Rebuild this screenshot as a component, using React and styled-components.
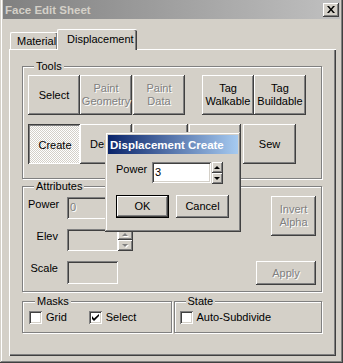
import React from 'react';
import styled, { createGlobalStyle, css } from 'styled-components';

const GlobalStyle = createGlobalStyle`
  html, body { margin: 0; padding: 0; background: #d4d0c8; }
  body {
    font-family: "Liberation Sans", Arial, sans-serif;
    font-size: 11px;
    color: #000;
  }
  * { box-sizing: border-box; }
`;

const raised = css`
  box-shadow: inset -1px -1px #404040, inset 1px 1px #fff, inset -2px -2px #808080, inset 2px 2px #d4d0c8;
`;

const sunken = css`
  box-shadow: inset 1px 1px #808080, inset -1px -1px #fff, inset 2px 2px #404040, inset -2px -2px #d4d0c8;
`;

const disabledText = css`
  color: #808080;
  text-shadow: 1px 1px 0 #fff;
`;

const Window = styled.div`
  position: relative;
  width: 343px;
  height: 363px;
  background: #d4d0c8;
  padding: 0 3px 3px 3px;
  display: flex;
  flex-direction: column;
  box-shadow: inset -1px -1px #404040, inset 1px 0 #d4d0c8, inset -2px -2px #808080, inset 2px 0 #fff;
`;

const TitleBar = styled.div`
  height: 19px;
  flex: 0 0 19px;
  display: flex;
  align-items: center;
  justify-content: space-between;
  padding: 0 1px 0 2px;
  background: linear-gradient(to right, ${p => p.$from}, ${p => p.$to});
  color: ${p => p.$color};
  font-weight: bold;
  font-size: 11.5px;
  white-space: nowrap;
`;

const CloseButton = styled.div`
  width: 16px;
  height: 14px;
  display: flex;
  align-items: center;
  justify-content: center;
  background: #d4d0c8;
  ${raised}
`;

const Body = styled.div`
  display: flex;
  flex-direction: column;
  padding: 10px 4px 0 6px;
`;

const TabStrip = styled.div`
  display: flex;
  align-items: flex-end;
  height: 20px;
  padding-left: 1px;
`;

const Tab = styled.div`
  position: relative;
  width: ${p => p.$width}px;
  height: ${p => (p.$active ? 21 : 17)}px;
  margin-bottom: ${p => (p.$active ? -1 : 0)}px;
  margin-left: ${p => (p.$active ? -1 : 0)}px;
  z-index: ${p => (p.$active ? 1 : 0)};
  padding-left: ${p => p.$pad}px;
  padding-top: ${p => (p.$active ? 3 : 2)}px;
  line-height: 13px;
  background: #d4d0c8;
  border-top: 1px solid #fff;
  border-left: 1px solid #fff;
  border-top-left-radius: 2px;
  border-top-right-radius: 2px;
  box-shadow: inset -1px 0 #404040, inset -2px 0 #808080;
`;

const Panel = styled.div`
  height: 307px;
  display: flex;
  flex-direction: column;
  gap: 1px;
  padding: 10px 14px 0 12px;
  border-top: 1px solid #fff;
  border-left: 1px solid #fff;
  box-shadow: inset -1px -1px #404040, inset -2px -2px #808080;
`;

const GroupBox = styled.fieldset`
  margin: 0;
  min-width: 0;
  padding: ${p => p.$pad};
  border: 1px solid #808080;
  box-shadow: 1px 1px 0 #fff, inset 1px 1px 0 #fff;
  flex: ${p => p.$flex || 'none'};
`;

const Legend = styled.legend`
  margin-left: 6px;
  padding: 0 2px;
  line-height: 13px;
  background: #d4d0c8;
`;

const ToolRow = styled.div`
  display: flex;
  margin-top: ${p => p.$top || 0}px;
`;

const PushButton = styled.div`
  width: ${p => p.$w}px;
  height: ${p => p.$h}px;
  margin-left: ${p => p.$gap || 0}px;
  display: flex;
  align-items: center;
  justify-content: center;
  text-align: center;
  line-height: 13px;
  white-space: pre-line;
  background: #d4d0c8;
  ${raised}
  ${p => p.$disabled && disabledText}
  ${p => p.$checked && css`
    background: repeating-conic-gradient(#fff 0 25%, #d4d0c8 0 50%) 0 0 / 2px 2px;
    box-shadow: inset 1px 1px #404040, inset -1px -1px #fff, inset 2px 2px #808080;
    padding: 2px 0 0 2px;
  `}
  ${p => p.$default && css`
    border: 1px solid #000;
  `}
`;

const AttrLayout = styled.div`
  display: flex;
  justify-content: space-between;
`;

const FieldGrid = styled.div`
  display: grid;
  grid-template-columns: 30px auto;
  grid-auto-rows: 22px;
  column-gap: 9px;
  row-gap: 10px;
`;

const Label = styled.div`
  text-align: ${p => p.$align || 'right'};
  line-height: 13px;
  padding-top: 1px;
  width: ${p => (p.$width ? `${p.$width}px` : 'auto')};
`;

const FieldLine = styled.div`
  display: flex;
  align-items: stretch;
`;

const Field = styled.div`
  width: ${p => p.$w}px;
  height: ${p => p.$h}px;
  padding: 4px 3px 0;
  line-height: 13px;
  background: ${p => (p.$disabled ? '#d4d0c8' : '#fff')};
  ${sunken}
  ${p => p.$disabled && disabledText}
`;

const Spin = styled.div`
  display: flex;
  flex-direction: column;
  width: ${p => p.$w}px;
  height: ${p => p.$h}px;
  margin-left: ${p => p.$gap || 0}px;
`;

const SpinPart = styled.div`
  flex: 1;
  display: flex;
  align-items: center;
  justify-content: center;
  background: #d4d0c8;
  ${raised}
`;

const SideButtons = styled.div`
  display: flex;
  flex-direction: column;
  align-items: flex-end;
  gap: 25px;
  margin-top: -1px;
`;

const GroupRow = styled.div`
  display: flex;
  gap: 2px;
  margin-top: 2px;
`;

const CheckRow = styled.div`
  display: flex;
  gap: ${p => p.$gap}px;
`;

const CheckItem = styled.div`
  display: flex;
  align-items: center;
  gap: 4px;
  line-height: 13px;
`;

const CheckBox = styled.div`
  width: 13px;
  height: 13px;
  display: flex;
  align-items: center;
  justify-content: center;
  background: #fff;
  box-shadow: inset 1px 1px #808080, inset -1px -1px #fff, inset 2px 2px #404040, inset -2px -2px #d4d0c8;
`;

const Dialog = styled.div`
  position: absolute;
  left: 105px;
  top: 132px;
  width: 136px;
  height: 100px;
  padding: 3px;
  background: #d4d0c8;
  box-shadow: inset -1px -1px #404040, inset 1px 1px #d4d0c8, inset -2px -2px #808080, inset 2px 2px #fff;
`;

const DialogContent = styled.div`
  padding: 8px 0 0 8px;
`;

const DialogRow = styled.div`
  display: flex;
  align-items: flex-start;
`;

const ButtonRow = styled.div`
  display: flex;
  gap: 7px;
  margin-top: 11px;
`;

function Arrow({ up, disabled }) {
  const pts = up ? '0,3 3,0 6,3' : '0,0 3,3 6,0';
  return (
    <svg width="7" height="4" viewBox="0 0 7 4">
      {disabled && <polygon points={pts} fill="#fff" transform="translate(1,1)" />}
      <polygon points={pts} fill={disabled ? '#808080' : '#000'} />
    </svg>
  );
}

function CloseGlyph() {
  return (
    <svg width="8" height="7" viewBox="0 0 8 7">
      <path d="M0 0h2l2 2.5L6 0h2L5 3.5 8 7H6L4 4.5 2 7H0l3-3.5z" fill="#000" />
    </svg>
  );
}

function CheckMark() {
  return (
    <svg width="7" height="7" viewBox="0 0 7 7">
      <path d="M0 2v3l2 2 5-5V0L2 4.5z" fill="#000" />
    </svg>
  );
}

function Check({ label, checked }) {
  return (
    <CheckItem>
      <CheckBox>{checked && <CheckMark />}</CheckBox>
      <span>{label}</span>
    </CheckItem>
  );
}

export default function App() {
  return (
    <>
      <GlobalStyle />
      <Window>
        <TitleBar $from="#808080" $to="#c0c0c0" $color="#d4d0c8">
          <span>Face Edit Sheet</span>
          <CloseButton><CloseGlyph /></CloseButton>
        </TitleBar>
        <Body>
          <TabStrip>
            <Tab $width={48} $pad={6}>Material</Tab>
            <Tab $width={80} $pad={9} $active>Displacement</Tab>
          </TabStrip>
          <Panel>
            <GroupBox $pad="2px 0 14px 5px">
              <Legend>Tools</Legend>
              <ToolRow>
                <PushButton $w={52} $h={40}>Select</PushButton>
                <PushButton $w={52} $h={40} $disabled>{'Paint\nGeometry'}</PushButton>
                <PushButton $w={52} $h={40} $gap={1} $disabled>{'Paint\nData'}</PushButton>
                <PushButton $w={52} $h={40} $gap={17}>{'Tag\nWalkable'}</PushButton>
                <PushButton $w={52} $h={40}>{'Tag\nBuildable'}</PushButton>
              </ToolRow>
              <ToolRow $top={9}>
                <PushButton $w={52} $h={40} $checked>Create</PushButton>
                <PushButton $w={52} $h={40}>Delete</PushButton>
                {/* these two sit behind the dialog; their captions never show */}
                <PushButton $w={55} $h={40} $gap={1} />
                <PushButton $w={52} $h={40} $gap={1} />
                <PushButton $w={53} $h={40} $gap={2}>Sew</PushButton>
              </ToolRow>
            </GroupBox>

            <GroupBox $pad="4px 5px 6px 5px">
              <Legend>Attributes</Legend>
              <AttrLayout>
                <FieldGrid>
                  <Label>Power</Label>
                  <Field $w={51} $h={22} $disabled>0</Field>
                  <Label>Elev</Label>
                  <FieldLine>
                    <Field $w={51} $h={22} $disabled />
                    <Spin $w={15} $h={22}>
                      <SpinPart><Arrow up disabled /></SpinPart>
                      <SpinPart><Arrow disabled /></SpinPart>
                    </Spin>
                  </FieldLine>
                  <Label>Scale</Label>
                  <Field $w={51} $h={23} $disabled />
                </FieldGrid>
                <SideButtons>
                  <PushButton $w={45} $h={40} $disabled>{'Invert\nAlpha'}</PushButton>
                  <PushButton $w={60} $h={24} $disabled>Apply</PushButton>
                </SideButtons>
              </AttrLayout>
            </GroupBox>

            <GroupRow>
              <GroupBox $flex="1" $pad="3px 6px 8px 6px">
                <Legend>Masks</Legend>
                <CheckRow $gap={22}>
                  <Check label="Grid" />
                  <Check label="Select" checked />
                </CheckRow>
              </GroupBox>
              <GroupBox $flex="1" $pad="3px 6px 8px 5px">
                <Legend>State</Legend>
                <CheckRow $gap={0}>
                  <Check label="Auto-Subdivide" />
                </CheckRow>
              </GroupBox>
            </GroupRow>
          </Panel>
        </Body>

        <Dialog>
          <TitleBar $from="#0a246a" $to="#a6caf0" $color="#fff">
            <span>Displacement Create</span>
          </TitleBar>
          <DialogContent>
            <DialogRow>
              <Label $align="left" $width={36}>Power</Label>
              <Field $w={59} $h={21}>3</Field>
              <Spin $w={11} $h={22} $gap={1}>
                <SpinPart><Arrow up /></SpinPart>
                <SpinPart><Arrow /></SpinPart>
              </Spin>
            </DialogRow>
            <ButtonRow>
              <PushButton $w={53} $h={23} $default>OK</PushButton>
              <PushButton $w={53} $h={23}>Cancel</PushButton>
            </ButtonRow>
          </DialogContent>
        </Dialog>
      </Window>
    </>
  );
}
